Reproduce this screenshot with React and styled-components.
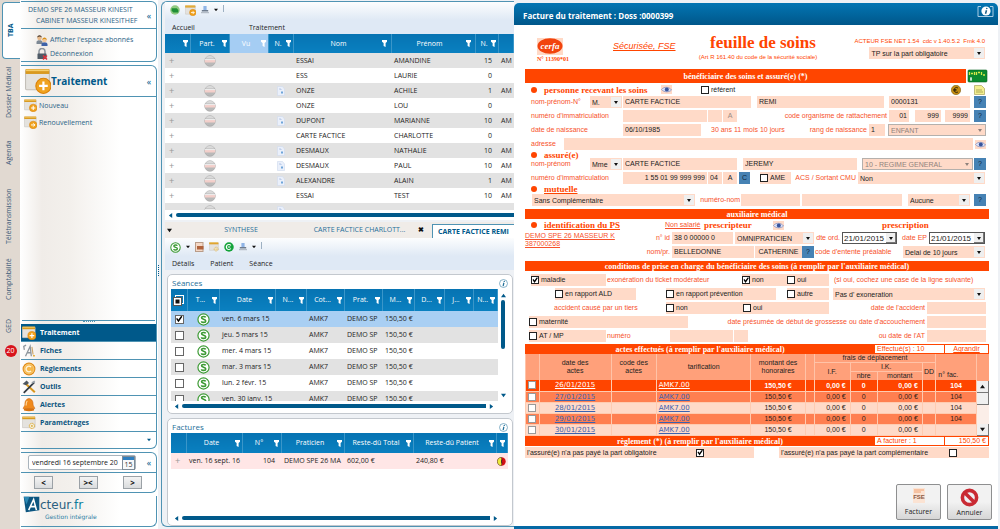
import React from 'react';
import styled, { createGlobalStyle, css } from 'styled-components';

const UI = '"Open Sans", "Noto Sans", sans-serif';
const ARIAL = '"Liberation Sans", Arial, sans-serif';
const SERIF = '"Liberation Serif", serif';
const BLUE = '#00598a';
const LINE = '#4f93b3';
const RED = '#ff4500';
const PEACH = '#ffdac8';

const GlobalStyle = createGlobalStyle`
  *, *::before, *::after { box-sizing: border-box; }
  body { margin: 0; background: #eef1f5; overflow: hidden; }
  button, input, select { font: inherit; color: inherit; margin: 0; }
  svg { display: block; flex: none; }
`;

/* ---------- shell ---------- */
const Shell = styled.div`
  display: grid;
  grid-template-columns: 20px 138px minmax(0, 356fr) minmax(0, 486fr);
  height: 100vh;
  min-height: 529px;
  font: 8px/12px ${UI};
  color: #222;
`;

/* ---------- rail ---------- */
const Rail = styled.nav`
  display: flex;
  flex-direction: column;
  align-items: center;
  background: #e1d9d1;
  padding-top: 2px;
`;
const RailTab = styled.button`
  writing-mode: vertical-rl;
  transform: rotate(180deg);
  width: 100%;
  height: ${p => p.$h}px;
  padding: 0 0 0 2px;
  border: 0;
  background: none;
  color: #3b5a78;
  text-align: center;
  white-space: nowrap;
  font-size: 7px;
  ${p => p.$on && css`
    width: 18px;
    align-self: flex-end;
    background: #fff;
    border: solid ${LINE};
    border-width: 1px 1px 1px 0;
    border-radius: 0 4px 4px 0;
    font-weight: 700;
    color: ${BLUE};
  `}
`;
const Badge = styled.span`
  width: 12px;
  height: 12px;
  margin-left: 1px;
  border-radius: 50%;
  background: #d8131b;
  color: #fff;
  font: 7px/12px ${UI};
  text-align: center;
`;

/* ---------- sidebar ---------- */
const Side = styled.aside`
  position: relative;
  display: flex;
  flex-direction: column;
  gap: 3px;
  padding: 1px 1px 2px 1px;
  background: linear-gradient(90deg, #fff 0, #f0ece8 22px, #f3f0ec 50px, #fff 100px);
  color: #2b6387;
  &::after {
    content: '';
    position: absolute;
    top: 50%;
    right: -1px;
    height: 11px;
    border-right: 1px dotted ${BLUE};
  }
`;
const Panel = styled.section`
  display: flex;
  flex-direction: column;
  border: solid ${LINE};
  border-width: 1px 1px 1px 0;
  border-radius: 0 6px 6px 0;
  flex: ${p => (p.$grow ? 1 : 'none')};
  height: ${p => (p.$h ? p.$h + 'px' : 'auto')};
`;
const PanelHead = styled.header`
  display: flex;
  align-items: center;
  height: ${p => p.$h}px;
  border-bottom: 1px solid ${LINE};
  line-height: 11px;
`;
const Owner = styled.div`
  flex: 1;
  min-width: 0;
  overflow: hidden;
  white-space: nowrap;
  font: 7px/11px ${UI};
  padding-left: 7px;
  span { display: block; }
  span + span { padding-left: 8px; }
`;
const Fold = styled.button`
  width: 14px;
  flex: none;
  padding: 0;
  border: 0;
  background: none;
  color: ${BLUE};
  font-size: 9px;
`;
const Title = styled.h2`
  flex: 1;
  margin: 0;
  font: 700 10px/14px ${UI};
  color: ${BLUE};
`;
const SideLink = styled.a`
  display: flex;
  align-items: center;
  gap: 2px;
  height: ${p => p.$h || 14}px;
  padding-left: ${p => p.$in || 3}px;
  color: #2b6387;
  text-decoration: none;
  white-space: nowrap;
  font-size: 7px;
`;
const Spring = styled.div`flex: 1;`;
const Grip = styled.div`
  height: 4px;
  border-top: 1px solid ${LINE};
  margin: 0 1px;
  &::after {
    content: '';
    display: block;
    width: 12px;
    margin: 0 auto;
    border-top: 1px dotted ${LINE};
  }
`;
const NavItem = styled.button`
  display: flex;
  align-items: center;
  gap: 4px;
  width: 100%;
  height: 18px;
  padding: 0 0 0 1px;
  border: 0;
  border-bottom: 1px solid ${LINE};
  background: ${p => (p.$on ? BLUE : 'transparent')};
  color: ${p => (p.$on ? '#fff' : '#0b5580')};
  font-weight: 700;
  font-size: 7px;
`;
const NavMore = styled.div`
  height: 16px;
  padding: 6px 5px 0 0;
  display: flex;
  justify-content: flex-end;
`;
const DateRow = styled.div`
  display: flex;
  align-items: center;
  height: 20px;
  border-bottom: 1px solid ${LINE};
  padding-left: 7px;
`;
const DateBox = styled.div`
  display: flex;
  align-items: center;
  flex: 1;
  min-width: 0;
  height: 15px;
  margin-right: 6px;
  background: #fff;
  border: 1px solid #a9b4bd;
  border-radius: 2px;
  input {
    flex: 1;
    min-width: 0;
    height: 13px;
    padding: 0 0 0 3px;
    border: 0;
    background: none;
    color: #222;
    font-size: 7px;
  }
`;
const DayRow = styled.div`
  display: flex;
  justify-content: space-between;
  align-items: center;
  flex: 1;
  padding: 0 14px 0 13px;
`;
const DayBtn = styled.button`
  width: 19px;
  height: 13px;
  padding: 0;
  border: 1px solid #9ba1a6;
  background: linear-gradient(#f4f4f4, #d9dbdd);
  color: #111;
  font: 700 8px/9px ${UI};
  white-space: nowrap;
`;
const Brand = styled.div`
  display: flex;
  height: 31px;
  align-items: flex-start;
  border-bottom: 1px solid ${LINE};
  border-right: 1px solid ${LINE};
  border-radius: 0 0 6px 0;
  padding: 0 0 0 2px;
`;
const BrandText = styled.div`
  font: 12px/13px "DejaVu Sans", sans-serif;
  color: #2c5f80;
  padding-top: 3px;
  b { font-weight: 400; color: #0e7d9c; }
  small { display: block; font: 6px/9px "DejaVu Sans", sans-serif; color: #2d7fa5; padding-left: 5px; white-space: nowrap; }
`;

/* ---------- centre ---------- */
const Main = styled.main`
  display: flex;
  flex-direction: column;
  min-width: 0;
  margin: 1px 0 2px 3px;
  border: solid ${LINE};
  border-width: 1px 0 1px 1px;
  border-radius: 6px 0 0 6px;
  padding-left: 3px;
  overflow: hidden;
`;
const Tools = styled.div`
  display: flex;
  align-items: center;
  gap: ${p => p.$gap || 5}px;
  height: ${p => p.$h}px;
  padding: 0 0 ${p => p.$pb || 0}px 5px;
  background: linear-gradient(#fcfdfe, #dfe9f5);
`;
const Menu = styled.div`
  display: flex;
  gap: ${p => p.$gap}px;
  height: 14px;
  padding-left: 5px;
  background: #dfe9f5;
  button { border: 0; padding: 0 2px; background: none; color: #1d1d1d; font: 7px/13px ${UI}; }
`;
const Pipe = styled.i`
  width: 1px;
  height: 7px;
  background: #9db0c2;
  margin-bottom: 3px;
`;
const Clip = styled.div`
  overflow: hidden;
  height: ${p => (p.$h ? p.$h + 'px' : 'auto')};
  flex: ${p => (p.$grow ? 1 : 'none')};
  min-width: 0;
  background: #fff;
`;
const Grid = styled.table`
  width: 100%;
  table-layout: fixed;
  border-collapse: collapse;
  font: 7px/12px ${UI};
  th {
    height: ${p => p.$head}px;
    padding: 0 2px;
    border-right: 1px solid #3a96c9;
    color: #fff;
    font: 7px/12px ${UI};
    white-space: nowrap;
    overflow: hidden;
  }
  td {
    height: ${p => p.$row}px;
    padding: 0 0 0 3px;
    white-space: nowrap;
    overflow: hidden;
    line-height: 14px;
  }
`;
const Th = styled.th`
  background: ${p => (p.$sorted ? '#a5cdf3' : 'linear-gradient(#0673b2, #0a80c0)')};
`;
const HeadCell = styled.div`
  display: flex;
  align-items: center;
  padding-right: ${p => p.$pad || 0}px;
  span { flex: 1; text-align: center; min-width: 0; }
`;
const Tr = styled.tr`
  background: ${p => p.$bg};
`;
const Num = styled.td`
  text-align: right;
  && { padding-right: 6px; }
`;
const Mid = styled.td`
  && { padding: 0; }
  svg, input { margin: 0 auto; display: block; }
`;
const Plus = styled.td`
  color: #999;
  && { font: 9px/14px ${ARIAL}; padding-left: 4px; }
`;
const HScroll = styled.div`
  display: flex;
  align-items: center;
  gap: 3px;
  height: 10px;
  flex: none;
  padding: 0 ${p => p.$pr || 0}px 0 3px;
  background: #fff;
  i { flex: 1; height: 4px; border-radius: 2px 0 0 2px; background: ${BLUE}; }
`;
const TabStrip = styled.div`
  display: flex;
  align-items: center;
  height: 16px;
  margin-top: 2px;
  padding-left: 2px;
  background: #f0ece8;
`;
const Tab = styled.button`
  width: ${p => p.$w}px;
  flex: ${p => (p.$on ? '1 0 82px' : 'none')};
  height: 14px;
  padding: 0 0 0 5px;
  border: 0;
  background: none;
  color: #1f6f99;
  font: 7px/12px ${UI};
  white-space: nowrap;
  text-align: ${p => (p.$on ? 'left' : 'center')};
  ${p => p.$x && css`color: #111; padding: 0;`}
  ${p => p.$on && css`
    align-self: flex-end;
    font-weight: 700;
    color: ${BLUE};
    background: #fff;
    border: solid ${LINE};
    border-width: 1px 0 0 1px;
  `}
`;
const Group = styled.section`
  display: flex;
  flex-direction: column;
  margin: ${p => p.$mt}px 1px 0 2px;
  height: ${p => (p.$h ? p.$h + 'px' : 'auto')};
  flex: ${p => (p.$grow ? 1 : 'none')};
  border: 1px solid #c3c8ce;
  border-radius: 5px;
  background: #fff;
  padding: 2px 4px 2px 3px;
  overflow: hidden;
  h3 { margin: 0; font: 8px/10px ${UI}; color: #1f6f99; flex: 1; padding-left: 1px; }
  header { display: flex; align-items: center; height: 12px; flex: none; }
`;
const WithScroll = styled.div`
  display: flex;
  min-height: 0;
`;
const VScroll = styled.div`
  width: 10px;
  display: flex;
  flex-direction: column;
  align-items: center;
  padding: 4px 0 3px;
  gap: 2px;
  i { width: 4px; height: 49px; border-radius: 2px; background: ${BLUE}; }
  svg:last-child { margin-top: auto; }
`;

/* ---------- tick boxes ---------- */
const Tick = styled.input.attrs({ type: 'checkbox' })`
  appearance: none;
  flex: none;
  width: ${p => p.$s || 8}px;
  height: ${p => p.$s || 8}px;
  border: 1px solid ${p => p.$edge || '#222'};
  background: #fff;
  &:checked::before {
    content: '';
    display: block;
    width: 100%;
    height: 100%;
    background: #000;
    clip-path: polygon(8% 45%, 25% 35%, 40% 60%, 82% 5%, 98% 18%, 42% 98%);
  }
`;

/* ---------- invoice window ---------- */
const Modal = styled.section`
  display: flex;
  flex-direction: column;
  min-width: 0;
  margin: 3px 2px 0 0;
  border-bottom: 3px solid #0569a5;
  border-radius: 5px 5px 0 0;
  background: #fff;
  overflow: hidden;
`;
const ModalHead = styled.header`
  display: flex;
  align-items: center;
  justify-content: space-between;
  height: 22px;
  flex: none;
  padding: 0 4px 0 9px;
  background: linear-gradient(#0375b3, #00578a);
  h1 { margin: 0; color: #fff; font: 700 8px/12px ${UI}; padding-top: 4px; }
  button { padding: 0; border: 0; background: none; margin-bottom: 6px; }
`;
const Form = styled.form`
  flex: 1;
  display: flex;
  flex-direction: column;
  padding: 0 9px 0 11px;
  font: 7px/12px ${ARIAL};
  color: #222;
`;
const Top = styled.div`
  display: grid;
  grid-template-columns: minmax(0, 75fr) minmax(0, 82fr) minmax(0, 162fr) minmax(0, 145fr);
  height: 44px;
  color: ${RED};
`;
const Cerfa = styled.div`
  padding: 13px 0 0 12px;
  font: 700 6px/8px ${SERIF};
`;
const Secure = styled.a`
  color: ${RED};
  font: italic 9px/12px ${ARIAL};
  padding: 15px 0 0 13px;
  white-space: nowrap;
`;
const SheetTitle = styled.div`
  text-align: center;
  white-space: nowrap;
  padding-top: 8px;
  h2 { margin: 0; font: 700 17px/20px ${SERIF}; }
  small { display: block; font: 6px/8px ${ARIAL}; padding-right: 10px; }
`;
const Meta = styled.div`
  display: flex;
  flex-direction: column;
  align-items: flex-end;
  padding: 10px 4px 0 0;
  white-space: nowrap;
  > span:first-child { font-size: 6px; }
  > span:last-child { width: 82%; }
`;
const BarRow = styled.div`
  display: flex;
  margin: ${p => p.$m || '0'};
  flex: none;
`;
const Bar = styled.h3`
  display: grid;
  grid-template-columns: 1fr auto auto;
  align-items: center;
  flex: 1;
  height: ${p => p.$h || 10}px;
  margin: 0;
  background: ${RED};
  color: #fff;
  text-align: center;
  font: 700 8px/9px ${SERIF};
  white-space: nowrap;
`;
const BarBox = styled.span`
  width: ${p => p.$w}px;
  height: 8px;
  margin-right: 1px;
  background: #fff;
  color: ${RED};
  font: 7px/8px ${ARIAL};
  text-align: ${p => p.$align || 'left'};
  padding: 0 2px;
  a { color: ${RED}; }
`;
const Row = styled.div`
  display: grid;
  grid-template-columns: ${p => p.$cols.split(' ').map(n => `minmax(0, ${n}fr)`).join(' ')};
  height: ${p => p.$h || 12}px;
  margin-bottom: ${p => (p.$mb === undefined ? 2 : p.$mb)}px;
  align-items: center;
`;
const Gap = styled.span``;
const Label = styled.label`
  color: #f7512a;
  font: 7px/12px ${ARIAL};
  white-space: nowrap;
  padding: 0 1px 0 ${p => (p.$in === undefined ? 1 : p.$in)}px;
  ${p => p.$right && css`display: flex; justify-content: flex-end;`}
`;
const Field = styled.input`
  width: 100%;
  min-width: 0;
  height: 12px;
  padding: 0 2px;
  border: 0;
  background: ${PEACH};
  color: ${p => (p.$off ? '#9b8b84' : '#222')};
  text-align: ${p => p.$align || 'left'};
`;
const SelectBox = styled.span`
  position: relative;
  display: block;
  height: 12px;
  select {
    appearance: none;
    display: block;
    width: 100%;
    height: 12px;
    padding: 0 11px 0 2px;
    border: ${p => (p.$off ? '1px solid #b5b0ac' : p.$date ? '1px solid #555' : '0')};
    border-radius: 0;
    background: ${p => (p.$date ? '#fff' : PEACH)};
    color: ${p => (p.$off ? '#8f827c' : '#222')};
    opacity: 1;
    line-height: 11px;
    ${p => p.$date && css`font-size: 8px; padding: 0 10px 0 1px;`}
  }
  &::before {
    content: '';
    position: absolute;
    top: 1px;
    bottom: 1px;
    right: 1px;
    width: 10px;
    background: ${p => (p.$off ? PEACH : '#efefef')};
    ${p => p.$date && css`border-right: 1px solid #777; border-bottom: 1px solid #777;`}
    pointer-events: none;
  }
  &::after {
    content: '';
    position: absolute;
    top: 5px;
    right: 4px;
    border: solid transparent;
    border-width: 3px 2px 0;
    border-top-color: ${p => (p.$off ? '#8f827c' : '#111')};
    pointer-events: none;
  }
`;
const Help = styled.button`
  width: 100%;
  height: 12px;
  padding: 0;
  border: 0;
  background: #4682b4;
  color: #0c2740;
  font: 7px/12px ${ARIAL};
`;
const CheckLabel = styled.label`
  display: flex;
  align-items: center;
  gap: 2px;
  height: 12px;
  background: ${p => (p.$plain ? 'none' : PEACH)};
  white-space: nowrap;
`;
const Head = styled.h4`
  display: flex;
  align-items: center;
  margin: 0;
  padding-left: 6px;
  gap: 7px;
  color: ${RED};
  font: 700 9px/10px ${SERIF};
  white-space: nowrap;
  &::before {
    content: '';
    width: 6px;
    height: 6px;
    border-radius: 50%;
    background: ${RED};
    display: ${p => (p.$bare ? 'none' : 'block')};
  }
  ${p => p.$bare && css`padding-left: 0;`}
  span { text-decoration: ${p => (p.$u ? 'underline' : 'none')}; }
`;
const RedLink = styled.a`
  color: #f7512a;
  font: 7px/8px ${ARIAL};
  white-space: nowrap;
`;
const Split = styled.div`
  display: grid;
  grid-template-columns: minmax(0, 115fr) minmax(0, 349fr);
  padding-top: 1px;
  > div:first-child { line-height: 8px; }
`;
const ActsBox = styled.div`
  display: flex;
  height: 82px;
  overflow: hidden;
  flex: none;
  background: #ffa07a;
`;
const Acts = styled.table`
  flex: 1;
  min-width: 0;
  height: fit-content;
  table-layout: fixed;
  border-collapse: collapse;
  font: 7px/9px ${ARIAL};
  th {
    font-weight: 400;
    padding: 0;
    height: 8px;
    line-height: 8px;
    border: 1px solid #ffc3a8;
    border-width: 0 1px;
    vertical-align: middle;
  }
  th.rule { border-bottom-width: 1px; }
  th.low { vertical-align: bottom; text-align: left; padding: 0 0 1px 2px; }
  tbody td {
    height: 11px;
    line-height: 9px;
    padding: 0 4px;
    border: 1px solid #ffcbb0;
    border-top: 0;
    text-align: center;
    white-space: nowrap;
  }
  tbody td.end { text-align: right; }
  tbody td.start { text-align: left; padding-left: 2px; }
  tbody td.box { padding: 0; }
`;
const ActRow = styled.tr`
  background: ${p => p.$bg};
  color: ${p => (p.$sel ? '#fff' : '#2b1d17')};
  a { color: ${p => (p.$sel ? '#fff' : '#3a62b0')}; }
  && td { font-weight: ${p => (p.$sel ? 700 : 400)}; font-family: ${ARIAL}; }
  && a { font: 400 7px/9px "DejaVu Sans", sans-serif; }
  input { display: block; margin: 0 auto; }
`;
const ActScroll = styled.div`
  width: 12px;
  flex: none;
  display: flex;
  flex-direction: column;
  justify-content: space-between;
  margin-top: 27px;
  background: #fbeee8;
  i {
    flex: none;
    height: 12px;
    display: flex;
    align-items: center;
    justify-content: center;
    background: #f0f0f0;
    border: solid #777;
    border-width: 0 1px 1px 0;
  }
  i:nth-child(2) { margin-bottom: auto; }
`;
const PayRow = styled.div`
  display: grid;
  grid-template-columns: minmax(0, 229fr) minmax(0, 25fr) minmax(0, 210fr);
  padding-top: 1px;
`;
const Pay = styled.label`
  display: flex;
  align-items: center;
  height: 11px;
  padding: 0 ${p => p.$pr}px 0 2px;
  background: ${PEACH};
  justify-content: space-between;
  white-space: nowrap;
`;
const Actions = styled.footer`
  display: flex;
  justify-content: flex-end;
  gap: 6px;
  margin: auto -3px 6px 0;
`;
const BigBtn = styled.button`
  display: flex;
  flex-direction: column;
  align-items: center;
  justify-content: space-between;
  width: 45px;
  height: 36px;
  padding: 3px 0 1px;
  border: 1px solid #8e8f90;
  border-radius: 2px;
  background: linear-gradient(#f2f2f2 50%, #d6d6d6);
  font: 7px/12px ${UI};
  color: #222;
`;

/* ---------- icons ---------- */
const Filter = () => (
  <svg width="5" height="7" viewBox="0 0 5 7"><path d="M0 0h5v1.800L3.600 3v4L1.600 6V3L0 1.800z" fill="#fff" /></svg>
);
const Tri = ({ d = 'down', c = '#111', s = 5 }) => (
  <svg width={s} height={s} viewBox="0 0 6 6">
    <path fill={c} d={{ down: 'M0 1h6L3 5z', up: 'M0 5h6L3 1z', left: 'M5 0v6L1 3z', right: 'M1 0v6L5 3z' }[d]} />
  </svg>
);
const Cal = ({ s = 14, mark = 'plus' }) => (
  <svg width={s} height={s} viewBox="0 0 24 24">
    <rect x="0.5" y="2" width="22" height="18" rx="1" fill="#e4e2de" stroke="#c3bfb8" />
    <rect x="0.5" y="1" width="22" height="4.5" fill="#d99a20" />
    <rect x="1" y="1.5" width="21" height="1.4" fill="#f6cf6d" />
    {mark === 'box' ? (
      <><circle cx="17" cy="17" r="4.500" fill="#f4eed8" stroke="#d9a530" strokeWidth="1.600" strokeDasharray="2.500 1" /><circle cx="17" cy="17" r="1.500" fill="#d9a530" /></>
    ) : (
      <><circle cx="17" cy="16.500" r="7" fill="#f0a21e" stroke="#d9820b" />
        {mark === 'plus' ? <path d="M17 12.500v8M13 16.500h8" stroke="#fff" strokeWidth="2" /> : <path d="M13 16.500h7m-3-3 3 3-3 3" stroke="#fff" strokeWidth="1.800" fill="none" />}</>
    )}
  </svg>
);
const Users = () => (
  <svg width="12" height="12" viewBox="0 0 24 24">
    <path d="M1 16c0-5 12-5 12 0v4H1z" fill="#7d8894" /><circle cx="7" cy="8" r="4.500" fill="#e7b98a" /><path d="M2.500 7C3 1 11 1 11.500 7 8 4 6 5 2.500 7z" fill="#4a3525" />
    <path d="M11 21c0-6 12-6 12 0v3H11z" fill="#3e62a8" /><circle cx="17" cy="12" r="4.500" fill="#f2c79a" /><path d="M12.500 12c0-7 9-7 9 0-3-3-6-3-9 0z" fill="#d9911a" />
  </svg>
);
const Lock = () => (
  <svg width="12" height="12" viewBox="0 0 24 24">
    <path d="M6 12V7a6 6 0 0 1 12 0v5" fill="none" stroke="#8b939b" strokeWidth="3" />
    <rect x="3" y="11" width="18" height="11" rx="1" fill="#4f5a66" /><path d="m14 15 8 8m0-8-8 8" stroke="#e0303a" strokeWidth="3" />
  </svg>
);
const Fiches = () => (
  <svg width="14" height="14" viewBox="0 0 24 24">
    <path d="M7 2 3 4l1 6M6 21 14 4l2 17M9 15h7" fill="none" stroke="#8d959c" strokeWidth="2.200" /><path d="M17 5l2 13" stroke="#c9a46a" strokeWidth="2" /><path d="M19 20h3" stroke="#e0a92c" strokeWidth="2.500" />
  </svg>
);
const Coin = () => (
  <svg width="14" height="14" viewBox="0 0 24 24">
    <circle cx="12" cy="12" r="11" fill="#e08a12" /><circle cx="12" cy="12" r="8.500" fill="#f7b84a" stroke="#fbe0a8" /><path d="M15.500 8.500a5 5 0 1 0 0 7" fill="none" stroke="#fff3d8" strokeWidth="2.400" />
  </svg>
);
const ToolsIcon = () => (
  <svg width="14" height="14" viewBox="0 0 24 24">
    <path d="M5 5 22 21" stroke="#d9971d" strokeWidth="3.500" /><path d="M21 4 3 22" stroke="#333b44" strokeWidth="3" /><path d="M1 7 8 1l4 4-5 4z" fill="#4d5660" /><path d="m17 5 5-3" stroke="#98a2ab" strokeWidth="3" />
  </svg>
);
const Bell = () => (
  <svg width="14" height="14" viewBox="0 0 24 24">
    <path d="M12 1c6 1 7 6 7 10 0 3 3 5 3 7H2c0-2 3-4 3-7 0-4 1-9 7-10z" fill="#f08a1d" stroke="#c9640a" /><path d="M9 5c-2 2-2 5-2 8" stroke="#ffd9a0" strokeWidth="2" fill="none" /><ellipse cx="12" cy="20" rx="9" ry="2.500" fill="#d9720e" />
  </svg>
);
const DayIcon = () => (
  <svg width="13" height="14" viewBox="0 0 13 14">
    <rect x="0.500" y="0.500" width="12" height="13" fill="#f6f8fa" stroke="#7e8c98" /><rect x="1" y="1" width="11" height="3" fill="#2f7fc0" />
    <text x="6.500" y="11" fontSize="7" textAnchor="middle" fill="#333" fontFamily="Open Sans">15</text>
  </svg>
);
const Logo = () => (
  <svg width="17" height="17" viewBox="0 0 24 24">
    <path d="M1 1h22v19L4 23z" fill="#0b5580" /><path d="M1 1h8L5 12z" fill="#2d89b4" /><path d="M8 20 15 5l4 15M11 15h7" fill="none" stroke="#fff" strokeWidth="2.200" />
  </svg>
);
const Ball = () => (
  <svg width="12" height="12" viewBox="0 0 12 12">
    <circle cx="6" cy="6" r="5.300" fill="#b9b9b9" stroke="#a3a3a3" strokeWidth="0.600" /><path d="M1.500 3.500A5 5 0 0 1 10.500 3.500z" fill="#d9d9d9" /><path d="M0.800 5h10.400v2.600H0.800z" fill="#f3cfca" /><path d="M0.800 4.600h10.400" stroke="#fff" strokeWidth="0.800" />
  </svg>
);
const Doc = () => (
  <svg width="8" height="10" viewBox="0 0 8 10">
    <path d="M0.500 0.500h5L7.500 3v6.500h-7z" fill="#eaf0fb" stroke="#d3dcee" strokeWidth="0.700" /><path d="M2 3h2v1" stroke="#a9bde2" fill="none" strokeWidth="0.800" /><rect x="4" y="5.500" width="2" height="2" fill="#6fa5da" />
  </svg>
);
const SCoin = ({ s = 13 }) => (
  <svg width={s} height={s} viewBox="0 0 14 14">
    <circle cx="7" cy="7" r="6" fill="#fff" stroke="#3c9a34" strokeWidth="1.300" />
    <path d="M9.400 4.700C8.500 3.400 4.900 3.300 4.900 5.200c0 2 4.500 1.200 4.500 3.400 0 2-3.900 2-4.800.4" fill="none" stroke="#3c9a34" strokeWidth="1.800" />
  </svg>
);
const GreenDot = ({ c }) => (
  <svg width="10" height="10" viewBox="0 0 12 12">
    <circle cx="6" cy="6" r="5.700" fill={c ? '#13a33a' : '#8fc97f'} />
    {c ? <path d="M8.200 4.200a3 3 0 1 0 0 3.600M4.500 6h3" fill="none" stroke="#fff" strokeWidth="1.400" /> : <path d="M2 4h6l2 2v3H4L2 7z" fill="#1f8f35" />}
  </svg>
);
const Printer = () => (
  <svg width="8" height="8" viewBox="0 0 10 10">
    <path d="M3 0h4v5H3z" fill="#8fb4e6" /><path d="M1 5h8v2H1z" fill="#6f7c8d" /><path d="M0 7.500h10V9H0z" fill="#b4bcc6" />
  </svg>
);
const Pdf = () => (
  <svg width="9" height="10" viewBox="0 0 9 10">
    <rect x="0.500" y="0.500" width="7.500" height="9" fill="#f4d8c6" stroke="#b99c88" /><rect x="2" y="4" width="6.500" height="3.500" fill="#b0633c" />
  </svg>
);
const Info = () => (
  <svg width="9" height="9" viewBox="0 0 12 12">
    <circle cx="6" cy="6" r="5.300" fill="#fff" stroke="#5f98b7" /><path d="M6.500 5 5.500 9.500" stroke="#1f6f99" strokeWidth="1.600" /><circle cx="7" cy="3.200" r="0.900" fill="#1f6f99" />
  </svg>
);
const HeadInfo = () => (
  <svg width="17" height="11" viewBox="0 0 17 11">
    <path d="M4 .5H1v10h15V.5h-3" fill="none" stroke="#a9cde4" /><circle cx="9" cy="5" r="4.600" fill="#fff" /><path d="M9.500 4.300 8.500 7.800" stroke="#1d5f86" strokeWidth="1.500" /><circle cx="9.800" cy="2.500" r="0.800" fill="#1d5f86" />
  </svg>
);
const Eye = () => (
  <svg width="11" height="9" viewBox="0 0 11 9">
    <rect width="11" height="9" fill={PEACH} /><path d="M0.500 4.500C3 1.500 8 1.500 10.500 5 8 7.500 3 7.500.5 4.500z" fill="#dfe6fb" stroke="#7a86b8" strokeWidth="0.700" /><circle cx="5.800" cy="4.500" r="2" fill="#38549c" />
  </svg>
);
const Euro = () => (
  <svg width="10" height="10" viewBox="0 0 10 10">
    <circle cx="5" cy="5" r="4.700" fill="#c58d12" stroke="#7d5a0c" strokeWidth="0.600" /><path d="M7 3a2.500 2.500 0 1 0 0 4M2.500 4.500h3M2.500 5.700h3" fill="none" stroke="#2d240a" strokeWidth="0.900" />
  </svg>
);
const Note = () => (
  <svg width="11" height="10" viewBox="0 0 11 10">
    <path d="M0.500 0.500h7l3 3v6h-10z" fill="#f3ee8e" stroke="#a8a45c" strokeWidth="0.700" /><path d="M2 5h6M2 7h7" stroke="#8f8b42" strokeWidth="0.700" />
  </svg>
);
const Vitale = () => (
  <svg width="23" height="14" viewBox="0 0 23 14">
    <rect x="2" y="1" width="19" height="12" rx="1" fill="#0c8a2f" stroke="#07611f" strokeWidth="0.600" /><path d="M3.500 3v3M5 4.500h2M8.500 3v3M10.500 3v3M12 3.500h2M15.500 3v3M17 6h2" stroke="#d8e84a" strokeWidth="1.300" fill="none" /><path d="M5 8v4M4 10h2" stroke="#fff" />
  </svg>
);
const CerfaLogo = () => (
  <svg width="26" height="17" viewBox="0 0 26 17">
    <rect width="26" height="17" fill="#ffd9c6" /><ellipse cx="13" cy="8" rx="12.500" ry="7.800" fill="#f2430d" />
    <text x="13" y="11" textAnchor="middle" fontFamily="Liberation Serif" fontStyle="italic" fontWeight="700" fontSize="9" fill="#fff">cerfa</text>
  </svg>
);
const FseIcon = () => (
  <svg width="12" height="15" viewBox="0 0 12 15">
    <rect width="12" height="15" fill="#fbe3d3" /><path d="M1 2h10M1 4h7" stroke="#f0a070" /><text x="6" y="11" textAnchor="middle" fontFamily="Liberation Sans" fontWeight="700" fontSize="6" fill="#8a5a44">FSE</text>
  </svg>
);
const Stop = () => (
  <svg width="19" height="19" viewBox="0 0 24 24">
    <circle cx="12" cy="12" r="9" fill="#eef0f4" stroke="#c92a33" strokeWidth="4.500" /><path d="m6 6 12 12" stroke="#c92a33" strokeWidth="4.500" />
  </svg>
);
const Half = () => (
  <svg width="9" height="9" viewBox="0 0 10 10">
    <circle cx="5" cy="5" r="4.700" fill="#d40f14" /><path d="M5 .3a4.700 4.700 0 0 0 0 9.400z" fill="#ece93a" stroke="#333" strokeWidth="0.500" /><path d="M6 3a2.500 2.500 0 0 0 0 4" stroke="#222" fill="none" />
  </svg>
);
const SelectAll = () => (
  <svg width="11" height="11" viewBox="0 0 11 11">
    <rect x="2.500" y="0.500" width="8" height="8" fill="#0879b8" stroke="#fff" /><rect x="0.500" y="2.500" width="8" height="8" fill="#fff" stroke="#555" /><rect x="2.500" y="4.500" width="4" height="4" fill="#111" />
  </svg>
);

/* ---------- data ---------- */
const patients = [
  ['ESSAI', 'AMANDINE', 15, 1, 0], ['ESS', 'LAURIE', 0, 0, 0], ['ONZE', 'ACHILE', 1, 1, 1], ['ONZE', 'LOU', 0, 1, 0],
  ['DUPONT', 'MARIANNE', 10, 1, 1], ['CARTE FACTICE', 'CHARLOTTE', 0, 0, 0], ['DESMAUX', 'NATHALIE', 10, 1, 1],
  ['DESMAUX', 'PAUL', 10, 1, 1], ['ALEXANDRE', 'ALAIN', 1, 1, 1], ['ESSAI', 'TEST', 10, 1, 0], ['', '', '', 1, 1],
];
const sessions = ['ven. 6 mars 15', 'jeu. 5 mars 15', 'mer. 4 mars 15', 'mar. 3 mars 15', 'lun. 2 févr. 15', 'ven. 30 janv. 15'];
const acts = ['26/01/2015', '27/01/2015', '28/01/2015', '29/01/2015', '30/01/2015'];
const navItems = [
  ['Traitement', <Cal />], ['Fiches', <Fiches />], ['Règlements', <Coin />],
  ['Outils', <ToolsIcon />], ['Alertes', <Bell />], ['Paramétrages', <Cal mark="box" />],
];

const Cols = ({ w }) => (
  <colgroup>{w.map((n, i) => <col key={i} style={{ width: n === '*' ? 'auto' : n }} />)}</colgroup>
);
const H = ({ children, sorted, bare, pad }) => (
  <Th $sorted={sorted}><HeadCell $pad={pad}><span>{children}</span>{!bare && <Filter />}</HeadCell></Th>
);
const Sel = ({ v, off, date, label, id }) => (
  <SelectBox $off={off} $date={date}>
    <select aria-label={label} id={id} disabled={off} defaultValue={v}><option>{v}</option></select>
  </SelectBox>
);
const F = ({ v = '', label, ...rest }) => <Field aria-label={label} defaultValue={v} {...rest} />;
const Check = ({ children, on, ...rest }) => (
  <CheckLabel {...rest}><Tick defaultChecked={on} />{children}</CheckLabel>
);

function Sidebar() {
  return (
    <Side>
      <Panel $h={61}>
        <PanelHead $h={27}>
          <Owner><span>DEMO SPE 26 MASSEUR KINESIT</span><span>CABINET MASSEUR KINESITHEF</span></Owner>
          <Fold aria-label="Réduire">«</Fold>
        </PanelHead>
        <Spring />
        <SideLink href="#abonnes" $in={15}><Users />Afficher l'espace abonnés</SideLink>
        <SideLink href="#quit" $in={15}><Lock />Déconnexion</SideLink>
      </Panel>
      <Panel $grow>
        <PanelHead $h={31}><SideLink as="span" $in={4} $h={26}><Cal s={26} /></SideLink><Title>Traitement</Title><Fold aria-label="Réduire">«</Fold></PanelHead>
        <SideLink href="#nouveau" $h={17}><Cal s={13} />Nouveau</SideLink>
        <SideLink href="#renouv" $h={17}><Cal s={13} mark="arrow" />Renouvellement</SideLink>
        <Spring />
        <Grip />
        {navItems.map(([t, icon], i) => <NavItem key={t} $on={i === 0}>{icon}{t}</NavItem>)}
        <NavMore><Tri s={4} c={BLUE} /></NavMore>
      </Panel>
      <Panel $h={41}>
        <DateRow>
          <DateBox><input aria-label="Date du jour" defaultValue="vendredi 16 septembre 20" /><DayIcon /></DateBox>
          <Fold aria-label="Réduire">«</Fold>
        </DateRow>
        <DayRow><DayBtn>&lt;</DayBtn><DayBtn>&gt;&lt;</DayBtn><DayBtn>&gt;</DayBtn></DayRow>
      </Panel>
      <Brand><Logo /><BrandText>cteur<b>.fr</b><small>Gestion intégrale</small></BrandText></Brand>
    </Side>
  );
}

function Centre() {
  return (
    <Main>
      <Tools $h={18} $pb={2}><GreenDot /><Cal s={11} mark="arrow" /><Printer /><Tri s={4} /><Pipe /></Tools>
      <Menu $gap={50}><button>Accueil</button><button>Traitement</button></Menu>
      <Clip $h={176}>
        <Grid $head={19} $row={15}>
          <Cols w={[25, 39, 39, 25, 98, 84, 23, '*']} />
          <thead><tr><H /><H>Part.</H><H sorted>Vu</H><H>N.</H><H pad={2}>Nom</H><H pad={2}>Prénom</H><H>N.</H><H bare /></tr></thead>
          <tbody>
            {patients.map(([nom, prenom, n, ball, doc], i) => (
              <Tr key={i} $bg={i % 2 ? '#fff' : '#e2e2e2'}>
                <Plus>{nom && '+'}</Plus><Mid>{ball ? <Ball /> : null}</Mid><td /><Mid>{doc ? <Doc /> : null}</Mid>
                <td>{nom}</td><td>{prenom}</td><Num>{n}</Num><td>{n ? 'AM' : ''}</td>
              </Tr>
            ))}
          </tbody>
        </Grid>
      </Clip>
      <HScroll><Tri d="left" c={BLUE} /><i /></HScroll>
      <TabStrip>
        <Tri s={5} /><Tab $w={133}>SYNTHESE</Tab><Tab $w={104}>CARTE FACTICE CHARLOTT...</Tab><Tab $w={23} $x aria-label="Fermer"><b>✖</b></Tab>
        <Tab $on>CARTE FACTICE REMI</Tab>
      </TabStrip>
      <Tools $h={18} $gap={5}><SCoin s={11} /><Tri s={4} /><Pdf /><Cal s={10} mark="box" /><GreenDot c /><Printer /><Tri s={4} /><Pipe /></Tools>
      <Menu $gap={12}><button>Détails</button><button>Patient</button><button>Séance</button></Menu>
      <Group $mt={4} $h={140}>
        <header><h3>Séances</h3><Info /></header>
        <WithScroll>
          <Clip $h={112} $grow>
            <Grid $head={22} $row={16}>
              <Cols w={[16, 32, 56, 31, 38, 38, 32, 30, 29, '*']} />
              <thead><tr>
                <Th><SelectAll /></Th><H>T...</H><H>Date</H><H>N...</H><H>Cot...</H><H>Prat.</H><H>M...</H><H>D...</H><H>J...</H><H>N...</H>
              </tr></thead>
              <tbody>
                {sessions.map((s, i) => (
                  <Tr key={s} $bg={i === 0 ? '#a9cff3' : i % 2 ? '#e2e2e2' : '#fff'}>
                    <Mid><Tick $s={9} $edge="#666" defaultChecked={i === 0} aria-label={s} /></Mid><Mid><SCoin /></Mid>
                    <td>{s}</td><td /><td>AMK7</td><td>DEMO SP</td><td>150,50 €</td><td /><td /><td />
                  </Tr>
                ))}
              </tbody>
            </Grid>
          </Clip>
          <VScroll><Tri d="up" c={BLUE} /><i /><Tri c={BLUE} /></VScroll>
        </WithScroll>
        <HScroll $pr={14}><Tri d="left" c={BLUE} /><i /><Tri d="right" c={BLUE} /></HScroll>
      </Group>
      <Group $mt={4} $grow>
        <header><h3>Factures</h3><Info /></header>
        <Clip $grow>
          <Grid $head={20} $row={16}>
            <Cols w={[15, 56, 39, 63, 69, 83, '*']} />
            <thead><tr><H bare /><H>Date</H><H>N°</H><H>Praticien</H><H>Reste-dû Total</H><H>Reste-dû Patient</H><H /></tr></thead>
            <tbody>
              <Tr $bg="#ffe6e6"><Plus>+</Plus><td>ven. 16 sept. 16</td><Num>104</Num><td>DEMO SPE 26 MA</td><td>602,00 €</td><td>240,80 €</td><Mid><Half /></Mid></Tr>
            </tbody>
          </Grid>
        </Clip>
        <HScroll $pr={10}><Tri d="left" c={BLUE} /><i /><Tri d="right" c={BLUE} /></HScroll>
      </Group>
    </Main>
  );
}

function Invoice() {
  return (
    <Modal>
      <ModalHead><h1>Facture du traitement : Doss :0000399</h1><button aria-label="Informations"><HeadInfo /></button></ModalHead>
      <Form onSubmit={e => e.preventDefault()}>
        <Top>
          <Cerfa><CerfaLogo />N° 11390*01</Cerfa>
          <Secure href="#fse">Sécurisée, FSE</Secure>
          <SheetTitle><h2>feuille de soins</h2><small>(Art R 161.40 du code de la sécurité sociale)</small></SheetTitle>
          <Meta><span>ACTEUR FSE NET 1.54&nbsp; cdc v 1.40.5.2&nbsp; Fmk 4.0</span><Sel label="Tiers payant" v="TP sur la part obligatoire" /></Meta>
        </Top>
        <BarRow><Bar $h={14}>bénéficiaire des soins et assuré(e) (*)</Bar><Vitale /></BarRow>
        <Row $cols="136 12 28 49 201 10 13 11 4" $h={13} $mb={0}>
          <Head><span>personne recevant les soins</span></Head><Eye /><Gap /><Check $plain>référent</Check><Gap /><Euro /><Gap /><Note /><Gap />
        </Row>
        <Row $cols="65 32 1 128 6 127 5 81 4 12 3">
          <Label $in={6} htmlFor="nom1">nom-prénom-N°</Label><Sel label="Civilité" v="M." /><Gap /><F id="nom1" v="CARTE FACTICE" /><Gap />
          <F label="Prénom" v="REMI" /><Gap /><F label="Numéro" v="0000131" /><Gap /><Help>?</Help><Gap />
        </Row>
        <Row $cols="98 84 1 14 1 14 151 1 20 6 26 4 25 4 12 3">
          <Label $in={6} htmlFor="im1">numéro d'immatriculation</Label><F id="im1" /><Gap /><F label="Clé" /><Gap /><F label="Type" v="A" $off $align="center" />
          <Label $right htmlFor="org">code organisme de rattachement</Label><Gap /><F id="org" v="01" $align="right" /><Gap /><F label="Caisse" v="999" $align="right" />
          <Gap /><F label="Centre" v="9999" $align="right" /><Gap /><Help>?</Help><Gap />
        </Row>
        <Row $cols="98 78 9 75 83 1 16 3 98 3">
          <Label $in={6} htmlFor="dn">date de naissance</Label><F id="dn" v="06/10/1985" /><Gap /><Label as="span">30 ans 11 mois 10 jours</Label>
          <Label $right htmlFor="rang">rang de naissance</Label><Gap /><F id="rang" v="1" /><Gap /><Sel off label="Qualité" v="ENFANT" /><Gap />
        </Row>
        <Row $cols="39 409 2 11 3" $mb={0}>
          <Label $in={6} htmlFor="adr">adresse</Label><F id="adr" /><Gap /><Eye /><Gap />
        </Row>
        <Row $cols="464" $h={8} $mb={0}><Head><span>assuré(e)</span></Head></Row>
        <Row $cols="65 32 1 114 6 114 5 111 1 12 3">
          <Label $in={6} htmlFor="nom2">nom-prénom</Label><Sel label="Civilité assuré" v="Mme" /><Gap /><F id="nom2" v="CARTE FACTICE" /><Gap />
          <F label="Prénom assuré" v="JEREMY" /><Gap /><Sel off label="Régime" v="10 - REGIME GENERAL" /><Gap /><Help>?</Help><Gap />
        </Row>
        <Row $cols="98 84 1 14 1 14 2 11 10 31 66 1 127 4" $mb={0}>
          <Label $in={6} htmlFor="im2">numéro d'immatriculation</Label><F id="im2" v="1 55 01 99 999 999" $align="right" /><Gap /><F label="Clé assuré" v="04" />
          <Gap /><F label="Type assuré" v="A" $align="center" /><Gap /><Help>C</Help><Gap /><Check>AME</Check>
          <Label $right htmlFor="acs">ACS / Sortant CMU</Label><Gap /><Sel id="acs" v="Non" /><Gap />
        </Row>
        <Row $cols="464" $h={10} $mb={0}><Head $u><span>mutuelle</span></Head></Row>
        <Row $cols="7 163 46 59 2 100 6 62 4 12 3">
          <Gap /><Sel label="Mutuelle" v="Sans Complémentaire" /><Label $right htmlFor="mut">numéro-nom</Label><F id="mut" /><Gap /><F label="Nom mutuelle" />
          <Gap /><Sel label="Garantie" v="Aucune" /><Gap /><Help>?</Help><Gap />
        </Row>
        <BarRow $m="1px 0 0"><Bar>auxiliaire médical</Bar></BarRow>
        <Row $cols="140 39 67 2 12 97 107" $mb={0}>
          <Head $u><span>identification du PS</span></Head><RedLink href="#ns">Non salarié</RedLink><Head $bare>prescripteur</Head><Gap /><Eye /><Gap /><Head $bare>prescription</Head>
        </Row>
        <Split>
          <div><RedLink href="#ps">DEMO SPE 26 MASSEUR K<br />387000268</RedLink></div>
          <div>
            <Row $cols="31 1 61 2 79 27 1 55 31 1 56 4">
              <Label $right htmlFor="nid">n° id</Label><Gap /><F id="nid" v="38 0 00000 0" /><Gap /><Sel label="Spécialité" v="OMNIPRATICIEN" />
              <Label $right htmlFor="dord">dte ord.</Label><Gap /><Sel date id="dord" v="21/01/2015" /><Label $right htmlFor="dep">date EP</Label><Gap /><Sel date id="dep" v="21/01/2015" /><Gap />
            </Row>
            <Row $cols="31 1 82 1 47 0 12 88 1 82 4">
              <Label $right htmlFor="npr">nom/pr.</Label><Gap /><F id="npr" v="BELLEDONNE" /><Gap /><F label="Prénom prescripteur" v="CATHERINE" $align="center" /><Gap /><Help>?</Help>
              <Label htmlFor="ent">code d'entente préalable</Label><Gap /><Sel id="ent" v="Delai de 10 jours" /><Gap />
            </Row>
          </div>
        </Split>
        <BarRow $m="1px 0 3px"><Bar>conditions de prise en charge du bénéficiaire des soins (à remplir par l'auxiliaire médical)</Bar></BarRow>
        <Row $cols="6 75 136 45 42 4 152 4">
          <Gap /><Check on>maladie</Check><Label as="span">exonération du ticket modérateur</Label><Check on>non</Check><Check>oui</Check><Gap />
          <Label as="span">(si oui, cochez une case de la ligne suivante)</Label><Gap />
        </Row>
        <Row $cols="30 81 30 110 11 42 4 152 4">
          <Gap /><Check>en rapport ALD</Check><Gap /><Check>en rapport prévention</Check><Gap /><Check>autre</Check><Gap /><Sel label="Exonération" v="Pas d' exoneration" /><Gap />
        </Row>
        <Row $cols="29 112 77 86 97 1 59 3">
          <Gap /><Label as="span" $in={0}>accident causé par un tiers</Label><Check>non</Check><Check>oui</Check><Label $right htmlFor="dacc">date de l'accident</Label><Gap /><F id="dacc" /><Gap />
        </Row>
        <Row $cols="4 159 238 1 59 3">
          <Gap /><Check>maternité</Check><Label $right htmlFor="dgr">date présumée de début de grossesse ou date d'accouchement</Label><Gap /><F id="dgr" /><Gap />
        </Row>
        <Row $cols="4 77 64 63 1 14 178 1 59 3">
          <Gap /><Check>AT / MP</Check><Label htmlFor="nat">numéro</Label><F id="nat" /><Gap /><F label="Clé AT" /><Label $right htmlFor="dat">ou date de l'AT</Label><Gap /><F id="dat" /><Gap />
        </Row>
        <BarRow>
          <Bar><span>actes effectués (à remplir par l'auxiliaire médical)</span><BarBox $w={69}>Effectué(s) : 10</BarBox><BarBox $w={43} $align="center"><a href="#agr">Agrandir</a></BarBox></Bar>
        </BarRow>
        <ActsBox>
          <Acts>
            <Cols w={['3%', '16%', '10%', '21%', '12%', '2%', '8%', '6%', '10%', '3%', '*']} />
            <thead>
              <tr><th rowSpan={3} /><th rowSpan={3}>date des<br />actes</th><th rowSpan={3}>code des<br />actes</th><th rowSpan={3}>tarification</th><th rowSpan={3}>montant des<br />honoraires</th><th rowSpan={3} /><th colSpan={4} className="rule">frais de déplacement</th><th rowSpan={3} className="low">n° fac.</th></tr>
              <tr><th rowSpan={2}>I.F.</th><th colSpan={2} className="rule">I.K.</th><th rowSpan={2}>DD</th></tr>
              <tr><th>nbre</th><th>montant</th></tr>
            </thead>
            <tbody>
              {acts.map((d, i) => (
                <ActRow key={d} $sel={i === 0} $bg={i === 0 ? RED : i % 2 ? '#ff7f50' : PEACH}>
                  <td className="box"><Tick $s={8} $edge="#999" aria-label={d} /></td><td><a href="#d">{d}</a></td><td /><td className="start"><a href="#t">AMK7.00</a></td>
                  <td>150,50 €</td><td /><td className="end">0,00 €</td><td>0</td><td className="end">0,00 €</td><td /><td>{i < 4 ? '104' : ''}</td>
                </ActRow>
              ))}
            </tbody>
          </Acts>
          <ActScroll><i><Tri d="up" /></i><i /><i><Tri /></i></ActScroll>
        </ActsBox>
        <BarRow>
          <Bar><span>règlement (*) (à remplir par l'auxiliaire médical)</span><BarBox $w={69}>A facturer : 1</BarBox><BarBox $w={43} $align="right">150,50 €</BarBox></Bar>
        </BarRow>
        <PayRow>
          <Pay $pr={50}>l'assuré(e) n'a pas payé la part obligatoire<Tick defaultChecked /></Pay><Gap />
          <Pay $pr={32}>l'assuré(e) n'a pas payé la part complémentaire<Tick /></Pay>
        </PayRow>
        <Actions><BigBtn><FseIcon />Facturer</BigBtn><BigBtn><Stop />Annuler</BigBtn></Actions>
      </Form>
    </Modal>
  );
}

export default function App() {
  return (
    <>
      <GlobalStyle />
      <Shell>
        <Rail>
          <RailTab $on $h={57}>TBA</RailTab><RailTab $h={66}>Dossier Médical</RailTab><RailTab $h={56}>Agenda</RailTab>
          <RailTab $h={70}>Télétransmission</RailTab><RailTab $h={56}>Comptabilité</RailTab><RailTab $h={38}>GED</RailTab><Badge>20</Badge>
        </Rail>
        <Sidebar />
        <Centre />
        <Invoice />
      </Shell>
    </>
  );
}
